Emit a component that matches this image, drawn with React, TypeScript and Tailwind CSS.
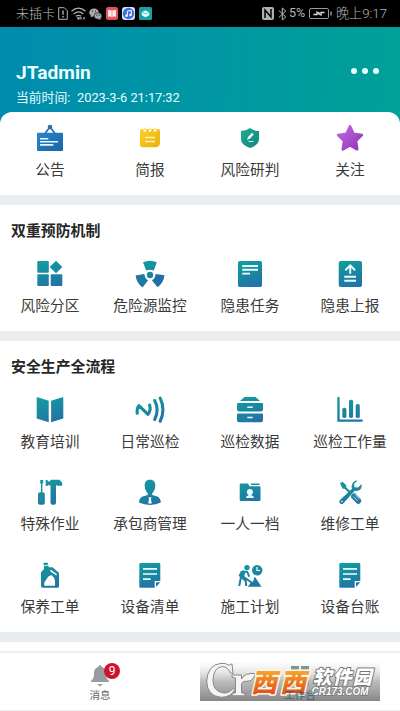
import React from "react";

const FONT = "font-['Roboto','Noto_Sans_CJK_SC',sans-serif]";
const CJK = "font-['Noto_Sans_CJK_SC',sans-serif]";
const G = "url(#teal)";

function Glyph({ children }: { children: React.ReactNode }) {
  return (
    <svg className="h-8 w-8 shrink-0" viewBox="0 0 32 32" fill={G}>
      {children}
    </svg>
  );
}

function Defs() {
  return (
    <svg className="absolute h-0 w-0" aria-hidden="true">
      <defs>
        <linearGradient id="teal" gradientUnits="userSpaceOnUse" x1="8" y1="4" x2="18" y2="29">
          <stop offset="0" stopColor="#129c9c" />
          <stop offset="1" stopColor="#2472a6" />
        </linearGradient>
        <linearGradient id="blue" x1="0" y1="0" x2="1" y2="1">
          <stop offset="0" stopColor="#2b86c8" />
          <stop offset="1" stopColor="#1765a7" />
        </linearGradient>
        <linearGradient id="gold" x1="0" y1="0" x2="1" y2="1">
          <stop offset="0" stopColor="#fad125" />
          <stop offset="1" stopColor="#edae10" />
        </linearGradient>
        <linearGradient id="green" x1="0" y1="0" x2="1" y2="1">
          <stop offset="0" stopColor="#20ab96" />
          <stop offset="1" stopColor="#0e867d" />
        </linearGradient>
        <linearGradient id="purple" x1="0" y1="0" x2="1" y2="1">
          <stop offset="0" stopColor="#c16add" />
          <stop offset="1" stopColor="#8f35bb" />
        </linearGradient>
        <linearGradient id="orange" gradientUnits="userSpaceOnUse" x1="0" y1="7" x2="0" y2="33">
          <stop offset="0" stopColor="#f6ae2c" />
          <stop offset="1" stopColor="#df4a18" />
        </linearGradient>
      </defs>
    </svg>
  );
}

const Notice = () => (
  <Glyph>
    <path d="M11 11.500 16 5l5 6.500" fill="none" stroke="#2a70a8" strokeWidth="1.700" />
    <circle cx="16" cy="5" r="2.300" fill="#2a70a8" />
    <rect x="3" y="10.700" width="26" height="18.300" rx="1" fill="url(#blue)" />
    <path d="M6 16.700h8.300M6 19.800h18M6 22.900h13.300" stroke="#e8f6ff" strokeWidth="1.600" />
  </Glyph>
);
const Brief = () => (
  <Glyph>
    <path d="M8 7h1.500v1.500a1.300 1.300 0 0 0 2.600 0V7h2.600v1.500a1.300 1.300 0 0 0 2.600 0V7h2.600v1.500a1.300 1.300 0 0 0 2.600 0V7H24q2 0 2 2v11.500q0 4.800-5 4.800H8.500Q6 25.300 6 23V9q0-2 2-2Z" fill="url(#gold)" />
    <path d="M10.800 5.700v2.500M16 5.700v2.500M21.200 5.700v2.500" stroke="#f4cf3e" strokeWidth="1" />
    <path d="M11 15.500h10M11 19.500h10" stroke="#fff4b5" strokeWidth="1.600" />
  </Glyph>
);
const Shield = () => (
  <Glyph>
    <path d="M16 6q4 3 9 3v8q0 6-9 9-9-3-9-9V9q5 0 9-3Z" fill="url(#green)" />
    <path d="m13 18 1-3 4-4.200 1.800 1.800-4 4.200Z" fill="#eafffa" />
    <path d="M14.500 19.500h5" stroke="#d7fff7" strokeWidth="1" />
  </Glyph>
);
const Star = () => (
  <Glyph>
    <path d="m16 4.300 3.500 7.400 8.400 1.400-5.900 5.700 1.200 8.500L16 23.400l-7.200 3.900L10 18.800l-5.900-5.700 8.400-1.400Z" fill="url(#purple)" stroke="url(#purple)" strokeWidth="2.600" strokeLinejoin="round" />
  </Glyph>
);
const Zones = () => (
  <Glyph>
    <rect x="3.300" y="3" width="11.500" height="11.700" rx="1" />
    <rect x="3.300" y="16.200" width="11.500" height="11.800" rx="1" />
    <rect x="16.700" y="16.200" width="11.600" height="11.800" rx="1" />
    <path d="m22 2.800 6.300 6.200-6.300 6.200L15.700 9Z" />
  </Glyph>
);
const Radiation = () => (
  <Glyph>
    <circle cx="16" cy="17" r="3.200" />
    <path d="M9 4.300Q16 1.300 22.800 4.300L19.800 12.500Q16 10.900 12.200 12.500Z" />
    <path d="M9 4.300Q16 1.300 22.800 4.300L19.800 12.500Q16 10.900 12.200 12.500Z" fill="#226fa5" transform="rotate(120 16 17)" />
    <path d="M9 4.300Q16 1.300 22.800 4.300L19.800 12.500Q16 10.900 12.200 12.500Z" fill="#1f78a3" transform="rotate(240 16 17)" />
  </Glyph>
);
const Task = () => (
  <Glyph>
    <rect x="4" y="3" width="24" height="26" rx="1.800" />
    <path d="M8.300 8H24M8.300 11.800H24M8.300 15.600H16" stroke="#eaffff" strokeWidth="1.900" />
  </Glyph>
);
const Report = () => (
  <Glyph>
    <rect x="4.700" y="3" width="23.300" height="26" rx="2" />
    <path d="M16.200 15.800V8M11.300 12.300l4.900-4.900 4.900 4.900M10.300 18.800H22M10.300 22.800H22" fill="none" stroke="#eaffff" strokeWidth="2" />
  </Glyph>
);
const Book = () => (
  <Glyph>
    <path d="M3.700 3.200 14.700 6.700v21.600L2.700 24.600V4q0-1 1-.8ZM28.300 3.200 17.100 6.700v21.600l12.200-3.700V4q0-1-1-.8Z" />
  </Glyph>
);
const Nfc = () => (
  <Glyph>
    <g fill="none" stroke={G} strokeWidth="3.100" strokeLinecap="round" strokeLinejoin="round">
      <path d="M3.200 19.300Q2.800 14 4.900 11.600L14 20.300Q17.200 16.500 15.600 11" />
      <path d="M20.700 6.500Q25.500 16 20.700 25.500" />
      <path d="M26.200 4.200Q31.700 16 26.200 27.200" />
    </g>
  </Glyph>
);
const Drawers = () => (
  <Glyph>
    <path d="M10.500 3h11L26 7H6ZM4 9h24q1 0 1 1v5.500q0 2-2 2H5q-2 0-2-2V10q0-1 1-1ZM4 19.600h24q1 0 1 1v5.700q0 2-2 2H5q-2 0-2-2v-5.700q0-1 1-1Z" />
    <path d="M13.300 13.300h5.400M13.300 23.500h5.400" stroke="#e8ffff" strokeWidth="1.600" />
  </Glyph>
);
const Chart = () => (
  <Glyph>
    <path d="M4.500 4v22.600h23.200" fill="none" stroke={G} strokeWidth="2.400" strokeLinecap="round" />
    <rect x="8.300" y="13.700" width="4.100" height="10.300" rx="1.700" />
    <rect x="15" y="5.700" width="4.100" height="18.300" rx="1.700" />
    <rect x="21.700" y="10" width="4.100" height="14" rx="1.700" />
  </Glyph>
);
const Tools = () => (
  <Glyph>
    <path d="M6.200 4h3v3l-.8 1v8.700H7V8L6.200 7Z" />
    <rect x="4" y="16.200" width="6.800" height="12.500" rx="2" />
    <path d="M11.700 4h1.500l1.300 1.500h1L17 3.700h8.500l2.700 3v3h-4.700L22 9v17.700q0 2-2 2h-1.500q-2 0-2-2V9.500L14.500 9l-1.300 1h-1.500Z" />
    <path d="M6.300 19v7M8.600 19v7" stroke="#3d98b5" strokeWidth=".5" />
  </Glyph>
);
const Person = () => (
  <Glyph>
    <path d="M16 3.700c-4 0-5.500 2.700-5.300 6 0 3.800 1.800 6.300 3 7.500v1.900L8.500 20.500q-3.500 1.800-3.500 6.100 4.800 2.400 11 2.400t10.800-2.400q0-4.300-3.500-6.100l-5.100-1.400v-1.900c1.300-1.200 3.100-3.700 3.100-7.500.2-3.300-1.300-6-5.300-6Z" />
    <path d="M14.500 21.200h3l-.6 1.800.9 4.500h-3.600L15 23Z" fill="#fff" />
  </Glyph>
);
const Folder = () => (
  <Glyph>
    <path d="M7 7.500h7l1.500 2.700h10q1 0 1 1V24q0 1-1 1H6.700q-1 0-1-1V8.800q0-1.300 1.300-1.300ZM16.500 7.500h9V9h-8.200Z" />
    <circle cx="15.900" cy="16" r="3" fill="#eaffff" />
    <path d="M14.500 18h2.800v1.200l2.300 1.300v1.600h-7.400v-1.600l2.300-1.300Z" fill="#eaffff" />
  </Glyph>
);
const Repair = () => (
  <Glyph>
    <path d="m6 7.300 2.500-1.600 3.800 3.500-.2 2 4.800 4.600-1.500 1.500-4.800-4.600-2 .1Z" />
    <path d="M23.800 4.200 20 7.900l.5 3.300 3.500.4 3.500-3.700q.9 5-3 6.700-1.900.7-3.700.1L9.400 27.300q-1.700 1.700-3.400 0t0-3.400L18 12.700q-1.200-2.800.7-5.800 1.800-2.500 5.100-2.700Z" />
    <path d="m17.200 19.200 2-2 1.800.1 5.700 5.800q1.500 2-.4 3.800t-3.700.4L17 21.500Z" />
    <path d="m19.300 20.500 4.500 4.700m-2.700-6.500 4.400 4.500" stroke="#d9f2f6" strokeWidth=".8" />
    <circle cx="7.900" cy="25.500" r=".8" fill="#fff" />
  </Glyph>
);
const OilCan = () => (
  <Glyph>
    <rect x="9.300" y="3.700" width="4.700" height="2.200" rx=".8" />
    <path d="M10 6.800h4.700v1.400h3.800l5.900 5q.6.600.6 1.500v12.500q0 1.500-1.500 1.500H9q-2 0-2-2V13.300L10 10Z" />
    <path d="m16.400 11.300 6.200 4.500" stroke="#fff" strokeWidth="1.500" />
    <path d="M10.300 26.700v-3.200l4-6 3.200-1.500q3.200 2.500 3.500 6v4.700Z" fill="#fff" />
  </Glyph>
);
const Sheet = () => (
  <Glyph>
    <path d="M6.500 4h18.700q1.100 0 1.100 1.200v16.700h-5.600v6.800H6.500q-1.200 0-1.200-1.200V5.200Q5.300 4 6.500 4ZM22 23.300h4.300L22 28Z" />
    <path d="M9 9.900h14M9 15h14M9 20.100h7.700" stroke="#eaffff" strokeWidth="1.700" />
  </Glyph>
);
const Works = () => (
  <Glyph>
    <circle cx="13" cy="8.600" r="2.700" />
    <circle cx="23.200" cy="11.200" r="5.200" />
    <path d="M23 8v3.500h3" fill="none" stroke="#fff" strokeWidth="1.200" />
    <path d="m20.700 17.600 6.800 10.200H13.800l3.900-5.200 1.300.1Z" />
    <path d="M8 12.300 13.400 13l1.800 4.600M7.600 13 5.400 17.300M7 18l-1.800 9M8 18.500l3.800 3.500.3 5M5.500 15l12 8.500" fill="none" stroke={G} strokeWidth="2" strokeLinejoin="round" />
    <path d="m7 12 4.500.6-1.500 6-4.500-.6Z" />
  </Glyph>
);

type Entry = [string, () => React.ReactElement];
const top: Entry[] = [["公告", Notice], ["简报", Brief], ["风险研判", Shield], ["关注", Star]];
const prevention: Entry[] = [["风险分区", Zones], ["危险源监控", Radiation], ["隐患任务", Task], ["隐患上报", Report]];
const flow: Entry[] = [
  ["教育培训", Book], ["日常巡检", Nfc], ["巡检数据", Drawers], ["巡检工作量", Chart],
  ["特殊作业", Tools], ["承包商管理", Person], ["一人一档", Folder], ["维修工单", Repair],
  ["保养工单", OilCan], ["设备清单", Sheet], ["施工计划", Works], ["设备台账", Sheet],
];

function Items({ items, rows = "" }: { items: Entry[]; rows?: string }) {
  return (
    <div className={`grid grid-cols-4 ${rows}`}>
      {items.map(([label, Icon]) => (
        <div key={label} className="flex flex-col items-center">
          <Icon />
          <span className={`${CJK} mt-[5px] whitespace-nowrap text-[14.700px] leading-5 text-[#3a3a3a]`}>{label}</span>
        </div>
      ))}
    </div>
  );
}

const Title = ({ children }: { children: string }) => (
  <h2 className={`${CJK} mb-[18px] pl-[11px] text-[14.900px] leading-5 font-bold text-[#262626]`}>{children}</h2>
);

function StatusBar() {
  return (
    <div className={`${FONT} flex h-[27px] items-center bg-black pr-[13px] pl-4 text-[13px] font-light text-[#b5b5b5]`}>
      <span className="w-[40px] whitespace-nowrap">未插卡</span>
      <svg className="ml-[2px] h-[13px] w-[10px]" viewBox="0 0 10 13" fill="none" stroke="#b0b0b0">
        <path d="M.7.700h5.600l3 3v8.600H.7Z" /><path d="M5 3.500v4.300M5 9v1.500" strokeWidth="1.400" />
      </svg>
      <svg className="ml-[3px] h-[13px] w-[15px]" viewBox="0 0 15 13" fill="none" stroke="#b0b0b0" strokeWidth="1.300">
        <path d="M.5 4.300Q7.500-2 14.500 4.300M2.700 6.900q4.800-4 9.600 0M4.900 9.300q2.600-2 5.200 0" />
        <circle cx="7.500" cy="11.300" r=".7" /><path d="M10 10v2.500M13 10v2.500" />
      </svg>
      <svg className="ml-[3px] h-[12px] w-[13px]" viewBox="0 0 13 12" fill="#aaa">
        <ellipse cx="5" cy="4.500" rx="4.800" ry="4" /><path d="m2 7-.5 2.500 3-1.500Z" />
        <ellipse cx="9" cy="8" rx="3.900" ry="3.300" stroke="#000" strokeWidth=".6" /><path d="m9 11 2.500 1-.2-2Z" />
        <path d="M3 3.300h1M6 3.300h1M7.300 7.200h1M9.700 7.200h1" stroke="#222" />
      </svg>
      <svg className="ml-[4px] h-[13px] w-[12px]" viewBox="0 0 12 13">
        <rect width="12" height="13" rx="2.500" fill="#e85261" /><path d="M2 3.300q2.300-.6 4 .5 1.700-1.100 4-.5v6.500q-2.300-.6-4 .4-1.700-1-4-.4Z" fill="#fbe7e8" /><path d="M6 3.500v6.500" stroke="#e85261" strokeWidth=".5" />
      </svg>
      <svg className="ml-[4px] h-[13px] w-[13px]" viewBox="0 0 13 13">
        <rect width="13" height="13" rx="3" fill="#dbe6ff" /><circle cx="6.500" cy="6.500" r="5.700" fill="#426cdf" />
        <path d="M5.300 8.700V4.200l4-.8v4.500" fill="none" stroke="#fff" /><circle cx="4.500" cy="8.800" r="1.200" fill="#fff" /><circle cx="8.500" cy="8" r="1.200" fill="#fff" />
      </svg>
      <svg className="ml-[4px] h-[13px] w-[13px]" viewBox="0 0 13 13">
        <rect width="13" height="13" rx="1.500" fill="#1aa2a2" /><path d="m6.500 3.200 3.700 2v3l-3.700 2-3.700-2v-3Z" fill="#edffff" /><path d="m3.200 5.400 3.300 1.700 3.300-1.700" fill="none" stroke="#1aa2a2" strokeWidth=".7" />
      </svg>
      <svg className="ml-auto h-[13px] w-[12px]" viewBox="0 0 12 13">
        <rect width="12" height="13" rx="2" fill="#b0b0b0" /><path d="M3 11V3l6 7V2" fill="none" stroke="#000" strokeWidth="1.500" />
      </svg>
      <svg className="ml-[4px] h-[14px] w-[9px]" viewBox="0 0 9 14" fill="none" stroke="#b5b5b5">
        <path d="m.8 3.500 7 6.500-3.500 3V1l3.500 3-7 6.500" />
      </svg>
      <span className="ml-[2px] w-[17px] text-[12.500px] font-normal whitespace-nowrap">5%</span>
      <svg className="ml-[3px] h-[11px] w-[23px]" viewBox="0 0 23 11" fill="none" stroke="#999">
        <rect x=".5" y=".5" width="19" height="10" rx="1.500" /><path d="M22 3.500v4" strokeWidth="1.500" />
        <path d="M4.500 6.500h3.500v-2.500l3 1.500M15.500 4.500h-3.500v2.500l-3-1.500" stroke="#ddd" strokeWidth="1.300" />
      </svg>
      <span className="ml-[4px] whitespace-nowrap text-[13.200px]">晚上9:17</span>
    </div>
  );
}

function Watermark() {
  return (
    <svg className="absolute top-[9px] left-[200px] h-[39px] w-[180px] overflow-visible" viewBox="0 0 180 39">
      <defs>
        <linearGradient id="shade" x1="0" y1="0" x2="0" y2="1">
          <stop offset="0" stopColor="#eee" stopOpacity=".15" />
          <stop offset=".5" stopColor="#aaa" stopOpacity=".8" />
          <stop offset="1" stopColor="#808080" stopOpacity=".95" />
        </linearGradient>
      </defs>
      <rect width="180" height="39" fill="url(#shade)" />
      <g fill="#f5f5f5" stroke="#888" strokeWidth="1" strokeLinejoin="round">
        <path fillRule="evenodd" d="M33 11.500 30.500 11Q27.500 4.500 22.500 4.500 13.500 5.500 13 17.500T24 31q6 0 9.500-5l1.500 1.200Q31 35.300 21 35.300 7 34 6.700 19 7.500 3 21 1.300q5-.3 8 2l3-1.500Z" />
        <path d="M32 13h9.500v4Q45 10.500 55 11.500q-1.500 8-8 7.700-3.500-.6-5.500 2.300v9.300l3.500.7v2.300H32v-2.300l3.500-.7V16L32 15.300Z" />
      </g>
      <g className="font-['Noto_Sans_CJK_SC',sans-serif]" fontWeight="900" transform="skewX(-13)" paintOrder="stroke" strokeLinejoin="round">
        <text x="58" y="30.300" fontSize="26" fill="url(#orange)" stroke="#fff6e8" strokeWidth="3">西</text>
        <text x="87" y="30.300" fontSize="26" fill="url(#orange)" stroke="#fff6e8" strokeWidth="3">西</text>
        <text x="118" y="22.500" fontSize="19" textLength="59" fill="#fff" stroke="#777" strokeWidth="2">软件园</text>
      </g>
      <text x="111.500" y="32.500" fontSize="10.500" textLength="57" lengthAdjust="spacingAndGlyphs" className="font-['Liberation_Sans',sans-serif]" fontWeight="bold" fontStyle="italic" fill="#fff" stroke="#777" strokeWidth="1.500" paintOrder="stroke">CR173.COM</text>
    </svg>
  );
}

export default function App() {
  return (
    <div className={`${FONT} relative flex h-[711px] w-[400px] flex-col overflow-hidden bg-white`}>
      <Defs />
      <StatusBar />
      <header className="flex h-[97px] items-start justify-between bg-linear-93 from-[#008cae] to-[#00a097] pr-[21px] pl-4 text-[#e9ffff]">
        <div className="pt-[34px]">
          <h1 className="text-[19.200px] leading-6 font-bold">JTadmin</h1>
          <p className="mt-[3px] flex text-[12.800px] leading-5 whitespace-nowrap"><span className="w-[61px]">当前时间:</span>2023-3-6 21:17:32</p>
        </div>
        <div className="mt-[41px] flex gap-[5px]">
          <i className="h-1.5 w-1.5 rounded-full bg-[#e9ffff]" />
          <i className="h-1.5 w-1.5 rounded-full bg-[#e9ffff]" />
          <i className="h-1.5 w-1.5 rounded-full bg-[#e9ffff]" />
        </div>
      </header>
      <section className="-mt-3 h-[83px] shrink-0 rounded-t-[12px] bg-white pt-[10px]"><Items items={top} /></section>
      <section className="h-[136px] shrink-0 border-t-10 border-[#e9edf0] pt-[15px]">
        <Title>双重预防机制</Title>
        <Items items={prevention} />
      </section>
      <section className="h-[311px] shrink-0 border-y-10 border-[#e9edf0] pt-[15px]">
        <Title>安全生产全流程</Title>
        <Items items={flow} rows="grid-rows-[82px_83px_58px]" />
      </section>
      <nav className="relative mt-[9px] flex h-[60px] shrink-0 border-y border-t-2 border-[#eee]">
        <div className="flex w-1/2 flex-col items-center pt-3">
          <div className="relative h-[22px] w-[18px]">
            <svg className="h-[22px] w-[18px]" viewBox="0 0 18 22" fill="#959ca2">
              <path d="M9 0q1.500 0 1.500 1.700Q15 3 15 8.500c0 4.500 1 5 3 7.500v1H0v-1c2-2.500 3-3 3-7.500Q3 3 7.500 1.700 7.500 0 9 0ZM6 19h6l-3 2.500Z" />
            </svg>
            <span className="absolute -top-[2px] left-[13px] flex h-4 w-4 items-center justify-center rounded-full bg-[#ce142c] text-[12px] text-white">9</span>
          </div>
          <span className="mt-[1px] text-[10.500px] leading-4 text-[#666]">消息</span>
        </div>
        <div className="flex w-1/2 flex-col items-center pt-[13px]">
          <div className="grid grid-cols-2 gap-0.5">
            <i className="h-[9px] w-2 bg-[#48777c]" /><i className="h-[9px] w-2 bg-[#48777c]" />
            <i className="h-[9px] w-2 bg-[#48777c]" /><i className="h-[9px] w-2 bg-[#48777c]" />
          </div>
          <span className="relative z-10 mt-[2px] text-[10.500px] leading-4 text-[#235f6a] opacity-80">工作台</span>
        </div>
        <Watermark />
      </nav>
    </div>
  );
}
